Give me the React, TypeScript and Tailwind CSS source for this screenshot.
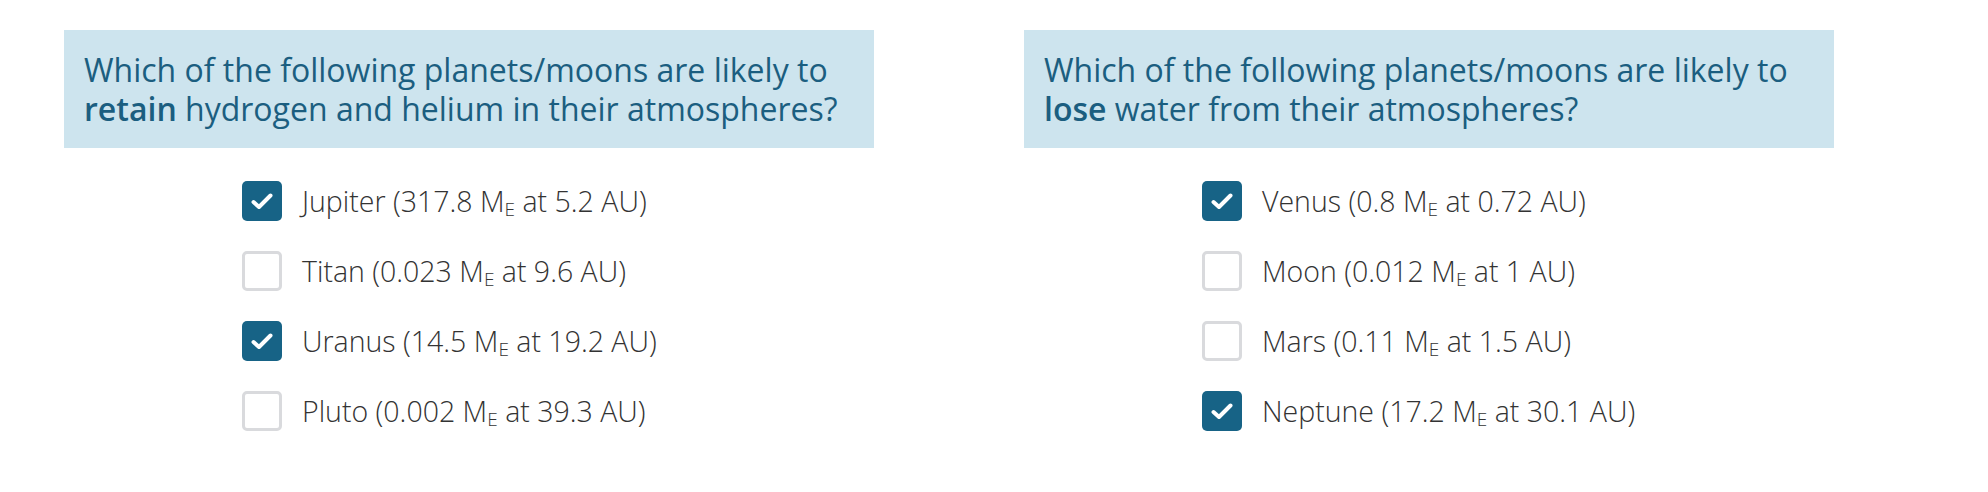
import React from 'react';

type Option = { name: string; mass: string; dist: string; checked: boolean };

const QUESTIONS: { lead: string; bold: string; rest: string; options: Option[] }[] = [
  {
    lead: 'Which of the following planets/moons are likely to',
    bold: 'retain',
    rest: 'hydrogen and helium in their atmospheres?',
    options: [
      { name: 'Jupiter', mass: '317.8', dist: '5.2', checked: true },
      { name: 'Titan', mass: '0.023', dist: '9.6', checked: false },
      { name: 'Uranus', mass: '14.5', dist: '19.2', checked: true },
      { name: 'Pluto', mass: '0.002', dist: '39.3', checked: false },
    ],
  },
  {
    lead: 'Which of the following planets/moons are likely to',
    bold: 'lose',
    rest: 'water from their atmospheres?',
    options: [
      { name: 'Venus', mass: '0.8', dist: '0.72', checked: true },
      { name: 'Moon', mass: '0.012', dist: '1', checked: false },
      { name: 'Mars', mass: '0.11', dist: '1.5', checked: false },
      { name: 'Neptune', mass: '17.2', dist: '30.1', checked: true },
    ],
  },
];

function Box({ checked }: { checked: boolean }) {
  if (checked) {
    return (
      <span className="flex h-10 w-10 flex-shrink-0 items-center justify-center rounded-[5px] bg-[#176386]">
        <svg width="22" height="17" viewBox="0 0 22 17" fill="none">
          <path d="M2.5 9 L8 14 L19.5 2.5" stroke="white" strokeWidth="4" strokeLinecap="round" strokeLinejoin="round" />
        </svg>
      </span>
    );
  }
  return <span className="h-10 w-10 flex-shrink-0 rounded-[5px] border-[3px] border-[#d9dadd] bg-white" />;
}

export default function App() {
  return (
    <div className="flex min-h-[492px] bg-white pl-16 pt-[30px] font-['Open_Sans',sans-serif]">
      {QUESTIONS.map((q) => (
        <div key={q.bold} className="w-[960px]">
          {/* question */}
          <div className="w-[810px] bg-[#cde4ee] p-5 text-[32px] leading-[39px] text-[#1b5e80]">
            {q.lead} <b className="font-semibold">{q.bold}</b> {q.rest}
          </div>

          {/* options */}
          <div className="mt-[33px] flex flex-col gap-[30px] pl-[178px]">
            {q.options.map((o) => (
              <label key={o.name} className="flex items-center gap-5 text-[28.5px] font-light leading-10 text-[#333333]">
                <Box checked={o.checked} />
                <span>
                  {o.name} ({o.mass} M<sub className="text-[19px] -bottom-[4px]">E</sub> at {o.dist} AU)
                </span>
              </label>
            ))}
          </div>
        </div>
      ))}
    </div>
  );
}
